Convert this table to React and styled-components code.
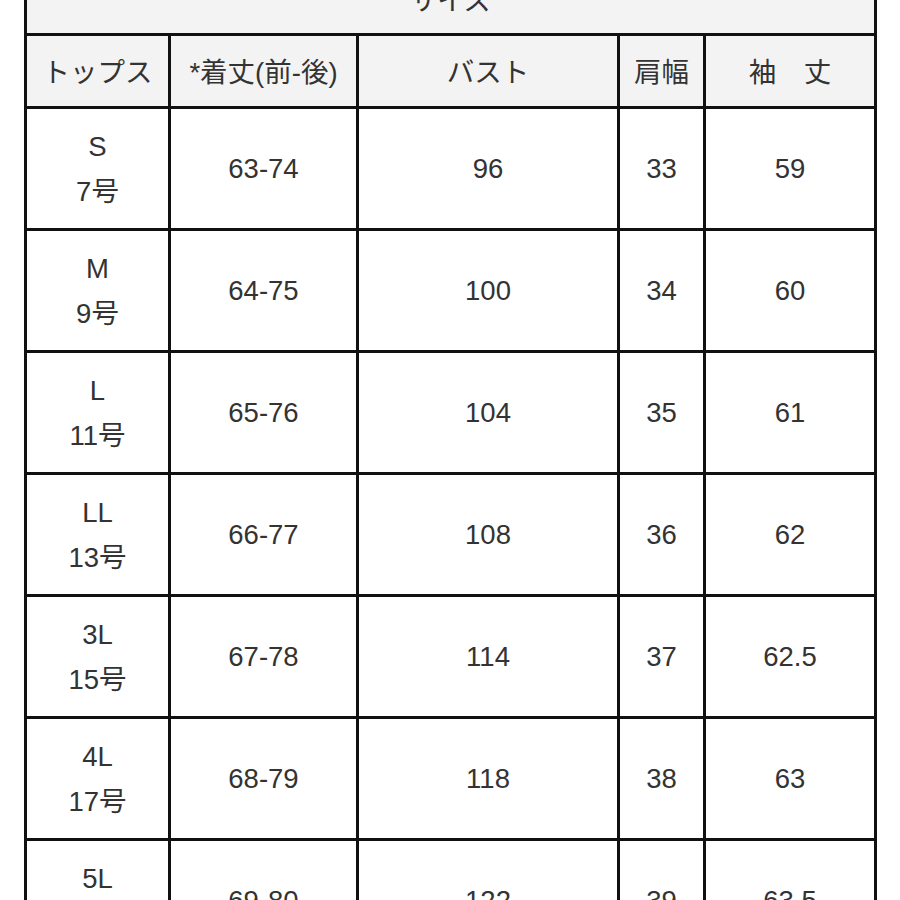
import styled, { createGlobalStyle } from "styled-components";

const GlobalStyle = createGlobalStyle`
    body {
        margin: 0;
        background: #ffffff;
        font-family: "Liberation Sans", "Noto Sans CJK JP", sans-serif;
        color: #333333;
    }
`;

const Page = styled.div`
    height: 900px;
    overflow: hidden;
`;

const SizeTable = styled.table`
    margin: -40px 0 0 24px;
    width: 852px;
    border-collapse: collapse;
    table-layout: fixed;
    border: 3px solid #111111;
`;

const Title = styled.th`
    height: 70px;
    padding: 0;
    background: #f3f3f3;
    border: 3px solid #111111;
    font-size: 27.5px;
    font-weight: 400;
`;

const HeadCell = styled.th`
    height: 67px;
    padding: 0 0 3px;
    background: #f3f3f3;
    border: 3px solid #111111;
    font-size: 27.5px;
    font-weight: 400;
    text-align: center;
    white-space: nowrap;
`;

const Cell = styled.td`
    height: 119px;
    padding: 0;
    border: 3px solid #111111;
    font-size: 27.5px;
    line-height: 45px;
    text-align: center;
    vertical-align: middle;
`;

const columns = [144, 188, 261, 86, 171];

const rows = [
    ["S", "7号", "63-74", "96", "33", "59"],
    ["M", "9号", "64-75", "100", "34", "60"],
    ["L", "11号", "65-76", "104", "35", "61"],
    ["LL", "13号", "66-77", "108", "36", "62"],
    ["3L", "15号", "67-78", "114", "37", "62.5"],
    ["4L", "17号", "68-79", "118", "38", "63"],
    ["5L", "19号", "69-80", "122", "39", "63.5"],
];

const App = () => {
    return (
        <Page>
            <GlobalStyle />
            <SizeTable>
                <colgroup>
                    {columns.map((w, i) => (
                        <col key={i} style={{ width: w }} />
                    ))}
                </colgroup>
                <thead>
                    <tr>
                        <Title colSpan={5}>サイズ</Title>
                    </tr>
                    <tr>
                        <HeadCell>トップス</HeadCell>
                        <HeadCell>*着丈(前-後)</HeadCell>
                        <HeadCell>バスト</HeadCell>
                        <HeadCell>肩幅</HeadCell>
                        <HeadCell>袖　丈</HeadCell>
                    </tr>
                </thead>
                <tbody>
                    {rows.map((r) => (
                        <tr key={r[0]}>
                            <Cell>
                                {r[0]}
                                <br />
                                {r[1]}
                            </Cell>
                            <Cell>{r[2]}</Cell>
                            <Cell>{r[3]}</Cell>
                            <Cell>{r[4]}</Cell>
                            <Cell>{r[5]}</Cell>
                        </tr>
                    ))}
                </tbody>
            </SizeTable>
        </Page>
    );
};

export default App;
